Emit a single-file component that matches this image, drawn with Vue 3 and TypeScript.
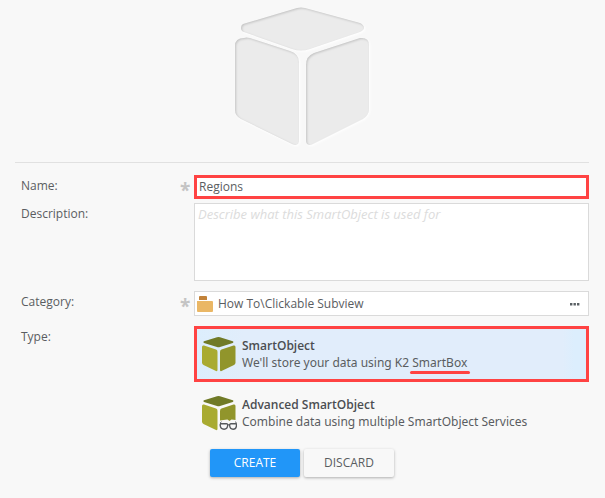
<script setup lang="ts">
import { ref } from 'vue'

type ObjectType = { id: string; title: string; text: string; marked: string; advanced: boolean }

const name = ref('Regions')
const description = ref('')
const category = ref('How To\\Clickable Subview')
const selected = ref('smartobject')

const types: ObjectType[] = [
  { id: 'smartobject', title: 'SmartObject', text: "We'll store your data using K2 ", marked: 'SmartBox', advanced: false },
  { id: 'advanced', title: 'Advanced SmartObject', text: 'Combine data using multiple SmartObject Services', marked: '', advanced: true },
]
</script>

<template>
  <form class="page" @submit.prevent>
    <header class="hero">
      <svg class="hero-cube" width="145" height="150" viewBox="0 0 145 150" aria-hidden="true">
        <defs>
          <filter id="inset" x="-10%" y="-10%" width="120%" height="120%">
            <feOffset in="SourceAlpha" dx="0.6" dy="1" result="moved" />
            <feGaussianBlur in="moved" stdDeviation="1" result="soft" />
            <feComposite in="SourceAlpha" in2="soft" operator="out" result="edge" />
            <feFlood flood-color="#888" flood-opacity="0.5" />
            <feComposite in2="edge" operator="in" result="shade" />
            <feOffset in="SourceAlpha" dx="1" dy="1" result="low" />
            <feGaussianBlur in="low" stdDeviation="1" result="lowsoft" />
            <feFlood flood-color="#fff" />
            <feComposite in2="lowsoft" operator="in" result="light" />
            <feMerge>
              <feMergeNode in="light" />
              <feMergeNode in="SourceGraphic" />
              <feMergeNode in="shade" />
            </feMerge>
          </filter>
        </defs>
        <g fill="#ebebeb" filter="url(#inset)">
          <path d="M13 24 L67 8 Q71 7 75 8 L130 23 Q134 25 134 28 Q134 30 130 32 L80 49 Q71 52 62 49 L14 32 Q11 31 11 28 Q11 25 13 24Z" />
          <path d="M14 38 Q16 37 20 38 L60 51 Q69 54 69 62 L69 140 Q69 147 62 144 L11 119 Q5 116 5 110 L5 46 Q5 38 14 38Z" />
          <path d="M130 38 Q139 37 139 45 L139 109 Q139 115 133 119 L83 144 Q76 147 76 140 L76 65 Q76 56 84 53Z" />
        </g>
      </svg>
    </header>

    <div class="fields">
      <label class="caption" for="name">Name:</label>
      <span class="required" aria-hidden="true">*</span>
      <input id="name" v-model="name" class="box name" type="text" required />

      <label class="caption" for="description">Description:</label>
      <textarea
        id="description"
        v-model="description"
        class="box description"
        placeholder="Describe what this SmartObject is used for"
      ></textarea>

      <label class="caption" for="category">Category:</label>
      <span class="required" aria-hidden="true">*</span>
      <div class="box category">
        <svg class="folder" width="16" height="16" viewBox="0 0 16 16" aria-hidden="true">
          <path fill="#c28239" d="M2 1q0-1 1-1h6q1 0 1 1v3H2z" />
          <path fill="#eab765" d="M0 5h15q1 0 1 1v9q0 1-1 1H1q-1 0-1-1z" />
        </svg>
        <input id="category" v-model="category" type="text" readonly />
        <button class="browse" type="button" aria-label="Browse">
          <svg width="10" height="4" viewBox="0 0 10 4" aria-hidden="true">
            <path fill="#5a6064" d="M0 1h2.400v2.400H0zM3.500 1h2.400v2.400H3.500zM7 1h2.400v2.400H7z" />
          </svg>
        </button>
      </div>

      <span id="type-caption" class="caption">Type:</span>
      <div class="types" role="radiogroup" aria-labelledby="type-caption">
        <label v-for="t in types" :key="t.id" class="type" :class="{ chosen: selected === t.id }">
          <input v-model="selected" class="radio" type="radio" name="type" :value="t.id" />
          <svg class="cube" width="36" height="36" viewBox="0 0 36 36" aria-hidden="true">
            <path fill="#707a27" d="M3 5.200 16 1.300q1.500-.4 3 0l12.800 3.900q1.600.8 0 1.700L19 11q-1.500.5-3 0L3 6.900q-1.500-.9 0-1.700z" />
            <path fill="#a9ab31" d="M1 11q0-2 2-1.400l12 4q1.500.5 1.500 2.400v18q0 1.500-1.500 1L2.500 29Q1 28.200 1 26.500z" />
            <path
              v-if="!t.advanced"
              fill="#91952b"
              d="M32.500 9.600q2-.6 2 1.400v15.500q0 1.700-1.500 2.500l-12.500 6q-1.500.5-1.500-1V16q0-1.900 1.500-2.400z"
            />
            <template v-else>
              <path fill="#91952b" d="M32.500 9.600q2-.6 2 1.400v14l-4-.5-2 1.500-2-1.500-4 .5-3.500.5V16q0-1.900 1.500-2.400z" />
              <path fill="#f8f8f8" d="M17 26.500h19V36H17z" />
              <g fill="none" stroke="#55585b" stroke-width="1.400">
                <path d="M20.300 28.800h5.200q1.300 0 1.200 1.500-.3 3.900-3.600 3.900-3.600 0-3.900-3.900-.1-1.500 1.100-1.500zM30 28.800h4.400q1.200 0 1.100 1.500-.3 3.900-3.400 3.900-3.200 0-3.500-3.900-.1-1.500 1.400-1.500z" />
                <path stroke-width="1" d="M19.500 29v-1.500l1-.7M35.200 29v-1.500l-1-.7M26.500 29.800h2" />
              </g>
            </template>
          </svg>
          <span class="words">
            <strong>{{ t.title }}</strong>
            <span class="note">{{ t.text }}<span v-if="t.marked" class="marked">{{ t.marked }}</span></span>
          </span>
        </label>
      </div>
    </div>

    <footer class="actions">
      <button class="action primary" type="submit">CREATE</button>
      <button class="action" type="button">DISCARD</button>
    </footer>
  </form>
</template>

<style>
body {
  background: #f8f8f8;
}
</style>

<style scoped>
.page {
  padding: 0 16px 20px 15px;
  color: #5a5d61;
  font: 12px/17px "Open Sans", "Noto Sans", sans-serif;
}
.page * {
  box-sizing: border-box;
}
.hero {
  display: flex;
  justify-content: center;
  height: 163px;
  border-bottom: 1px solid #e1e1e1;
}
.hero-cube {
  display: block;
}
.fields {
  display: grid;
  grid-template-columns: 165px 14px minmax(0, 1fr);
  align-items: start;
  padding-top: 12px;
}
.caption {
  grid-column: 1;
  padding: 2px 0 0 6px;
}
.required {
  grid-column: 2;
  padding-top: 5px;
  color: #c4c4c4;
  font-size: 19px;
  font-weight: 700;
  line-height: 20px;
}
.box,
.types {
  grid-column: 3;
  width: 100%;
}
.box {
  margin: 0;
  border: 1px solid #dadada;
  border-radius: 0;
  background: #fff;
  color: inherit;
  font: inherit;
  outline: none;
}
.name {
  height: 24px;
  margin-bottom: 4px;
  padding: 0 2px 1px;
  border: 3px solid #ff4343;
}
.description {
  display: block;
  height: 78px;
  margin-bottom: 10px;
  padding: 2px 3px;
  resize: none;
}
.description::placeholder {
  color: #dcdcdc;
  font-size: 13px;
  font-style: italic;
  opacity: 1;
}
.category {
  display: flex;
  align-items: center;
  height: 25px;
  margin-bottom: 10px;
  padding: 0 8px 0 2px;
}
.folder {
  flex: none;
}
.category input {
  flex: 1;
  min-width: 0;
  padding: 0 5px 1px;
  border: 0;
  background: none;
  color: inherit;
  font: inherit;
  outline: none;
}
.browse {
  display: flex;
  padding: 0;
  border: 0;
  background: none;
}
.types {
  display: grid;
  gap: 3px;
}
.type {
  display: flex;
  align-items: center;
  gap: 5px;
  height: 56px;
  padding: 0 4px;
  border: 3px solid transparent;
}
.type.chosen {
  border-color: #ff4343;
  background: linear-gradient(90deg, #dceefd, #e1edfb 12%, #e1edfb 94%, #dceefd 97%);
}
.radio {
  position: absolute;
  opacity: 0;
}
.cube {
  flex: none;
}
.words {
  display: grid;
}
.words strong {
  color: #4b4e52;
  font-weight: 600;
}
.note {
  font-family: "Noto Sans", "Open Sans", sans-serif;
}
.marked {
  position: relative;
}
.marked::after {
  position: absolute;
  right: -3px;
  bottom: -3px;
  left: -2px;
  height: 3px;
  border-radius: 2px;
  background: #ff4343;
  content: "";
}
.actions {
  display: flex;
  gap: 4px;
  padding: 8px 0 0 195px;
}
.action {
  width: 90px;
  height: 28px;
  padding: 0 0 1px;
  border: 0;
  border-radius: 2px;
  background: #f8f8f8;
  box-shadow: 0 1px 3px rgba(0, 0, 0, 0.3);
  color: inherit;
  font: inherit;
}
.action.primary {
  background: #2196f8;
  color: #fff;
}
</style>
